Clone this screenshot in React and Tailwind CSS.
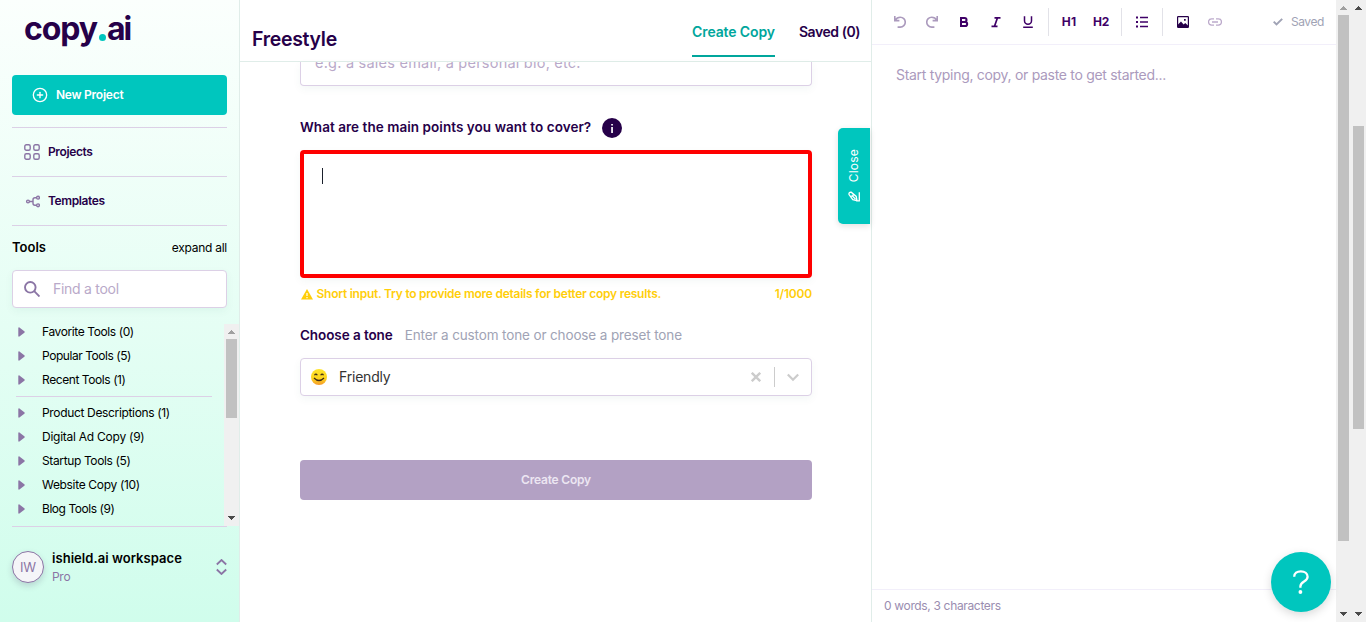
import React from "react";
import { FiPlusCircle } from "react-icons/fi";

const TOOLS_TOP = [
  ["Favorite Tools (0)", "tracking-[-0.4px]"],
  ["Popular Tools (5)", "tracking-[-0.45px]"],
  ["Recent Tools (1)", "tracking-[-0.42px]"],
];
const TOOLS_MAIN = [
  ["Product Descriptions (1)", "tracking-[-0.34px]"],
  ["Digital Ad Copy (9)", "tracking-[-0.25px]"],
  ["Startup Tools (5)", "tracking-[-0.37px]"],
  ["Website Copy (10)", "tracking-[-0.33px]"],
  ["Blog Tools (9)", "tracking-[-0.45px]"],
];

function ToolRow({ label, tracking }) {
  return (
    <li className="flex h-6 items-center">
      <svg className="ml-[6px] h-[10px] w-[7px]" viewBox="0 0 7 10">
        <path d="M0.3 1v8c0 .6.6.9 1.100.6L6 6a1.200 1.200 0 0 0 0-2L1.400.4C.9.1.3.4.3 1z" fill="#8b75a5" />
      </svg>
      <span className={"ml-[17px] text-[12px] text-black " + tracking}>{label}</span>
    </li>
  );
}

function Arrow({ up, color }) {
  return (
    <svg className="h-[15px] w-[15px] shrink-0" viewBox="0 0 15 15" shapeRendering="crispEdges">
      <path d={up ? "M4 10h7L7.5 6z" : "M4 5h7L7.5 9z"} fill={color} />
    </svg>
  );
}

function Sidebar() {
  return (
    <aside className="flex w-[240px] shrink-0 flex-col border-r border-[#e0ede9] bg-linear-to-b from-[#fbfffd] to-[#d0fdec]">
      <div className="flex h-[75px] items-start pt-[9px] pl-[24px] text-[32px] leading-[40px] font-bold text-[#260049]">
        <span className="tracking-[-1.1px]">copy</span>
        <span className="mt-[25px] ml-[2px] h-[7px] w-[7px] rounded-full bg-[#00c6be]" />
        <span className="ml-px tracking-[-2px]">ai</span>
      </div>
      <div className="flex flex-col px-3">
        <button className="flex h-10 w-[215px] items-center rounded-[4px] bg-[#00c6be] pl-5 text-[12px] font-semibold text-white">
          <FiPlusCircle className="h-4 w-4" />
          <span className="ml-2 tracking-[-0.25px]">New Project</span>
        </button>
        <div className="mt-3 flex h-[49px] w-[215px] items-center border-t border-[#dcd0e6] pl-3 text-[12px] font-semibold text-[#260049]">
          <svg className="h-4 w-4" viewBox="0 0 16 16" fill="none" stroke="#8b75a5" strokeWidth="1.4">
            <rect x="0.8" y="0.8" width="5.4" height="5.4" rx="1.5" />
            <rect x="9.8" y="0.8" width="5.4" height="5.4" rx="1.5" />
            <rect x="0.8" y="9.8" width="5.4" height="5.4" rx="1.5" />
            <rect x="9.8" y="9.8" width="5.4" height="5.4" rx="1.5" />
          </svg>
          <span className="ml-2 tracking-[-0.38px]">Projects</span>
        </div>
        <div className="flex h-[49px] w-[215px] items-center border-t border-[#dcd0e6] pl-3 text-[12px] font-semibold text-[#260049]">
          <svg className="h-4 w-4" viewBox="0 0 16 16" fill="none" stroke="#8b75a5" strokeWidth="1.400">
            <circle cx="4" cy="8.5" r="1.4" />
            <circle cx="14" cy="4.700" r="1.4" />
            <circle cx="14" cy="12.300" r="1.4" />
            <path d="M5.4 8.5H9M12.6 4.700H11a2 2 0 0 0-2 2v3.600a2 2 0 0 0 2 2h1.600" />
          </svg>
          <span className="ml-2 tracking-[-0.38px]">Templates</span>
        </div>
        <div className="flex h-[45px] w-[215px] items-center justify-between border-t border-[#dcd0e6] text-black">
          <span className="text-[13px] font-semibold">Tools</span>
          <span className="text-[12px] tracking-[-0.25px]">expand all</span>
        </div>
        <div className="flex h-[38px] w-[215px] items-center rounded-[4px] border border-[#dcd0e6] bg-white pl-[11px] shadow-[0_3px_8px_rgba(0,100,80,0.05)]">
          <svg className="h-4 w-4" viewBox="0 0 16 16" fill="none" stroke="#8b75a5" strokeWidth="1.900">
            <circle cx="6.3" cy="6.3" r="5.300" />
            <path d="M10.200 10.200l5.300 5.300" />
          </svg>
          <span className="mb-[2px] ml-[13px] text-[14px] tracking-[-0.28px] text-[#b9a9c9]">Find a tool</span>
        </div>
      </div>
      <div className="mt-4 flex h-[202px] pl-3">
        <div className="flex-1 overflow-hidden">
          <ul className="-mt-1">
            {TOOLS_TOP.map(([l, t]) => <ToolRow key={l} label={l} tracking={t} />)}
          </ul>
          <hr className="mt-1 mr-3 ml-1 border-[#dcd0e6]" />
          <ul className="mt-1">
            {TOOLS_MAIN.map(([l, t]) => <ToolRow key={l} label={l} tracking={t} />)}
          </ul>
        </div>
        <div className="flex w-[15px] shrink-0 flex-col items-center justify-between bg-[#f0f0f0]">
          <Arrow up color="#a0a0a0" />
          <div className="mb-auto h-[79px] w-[11px] bg-[#c1c1c1]" />
          <Arrow color="#4a4a4a" />
        </div>
      </div>
      <div className="mx-3 flex w-[215px] flex-1 items-start border-t border-[#dcd0e6]">
        <div className="mt-6 flex h-8 w-8 items-center justify-center rounded-full border border-[#8b75a5] bg-[#f5f5f8] pt-px text-[13px] tracking-[-0.2px] text-[#8b75a5] shadow-[0_3px_6px_rgba(60,40,90,0.18)]">IW</div>
        <div className="mt-[21px] ml-2 flex flex-col">
          <span className="text-[13px] leading-5 font-semibold tracking-[0.05px] text-black">ishield.ai workspace</span>
          <span className="mt-px text-[12px] leading-4 tracking-[-0.3px] text-[#8b75a5]">Pro</span>
        </div>
        <svg className="mt-8 ml-auto h-4 w-[11px]" viewBox="0 0 11 16" fill="none" stroke="#8b75a5" strokeWidth="1.800">
          <path d="M0.800 5.500L5.500 1l4.700 4.500M0.800 10.500l4.700 4.500 4.700-4.500" />
        </svg>
      </div>
    </aside>
  );
}

function Main() {
  return (
    <main className="relative flex w-[632px] shrink-0 flex-col border-r border-[#e0ede9] bg-white">
      <header className="flex h-[62px] shrink-0 border-b border-[#e0ede9] pr-[11px] pl-3 text-[#260049]">
        <h1 className="mt-[26px] text-[19.500px] leading-[26px] font-semibold tracking-[-0.3px]">Freestyle</h1>
        <nav className="ml-auto flex gap-6 text-[14px] font-semibold">
          <span className="h-[57px] border-b-2 border-[#00a69c] pt-[22px] leading-5 tracking-[-0.12px] text-[#00a69c]">Create Copy</span>
          <span className="pt-[22px] leading-5 tracking-[-0.45px]">Saved (0)</span>
        </nav>
      </header>
      <div className="ml-[60px] flex w-[512px] flex-1 flex-col">
        <div className="h-6 overflow-hidden rounded-b-[4px] border-x border-b border-[#dcd0e6] pl-[14px] shadow-[0_3px_8px_rgba(0,100,80,0.05)]">
          <span className="-mt-[9px] block text-[14.500px] leading-5 tracking-[0.230px] text-[#b9a9c9]">e.g. a sales email, a personal bio, etc.</span>
        </div>
        <div className="mt-[31px] flex h-5 items-center">
          <span className="text-[13.500px] font-semibold tracking-[0.050px] text-[#260049]">What are the main points you want to cover?</span>
          <svg className="mt-[2px] ml-[11px] h-5 w-5" viewBox="0 0 20 20">
            <circle cx="10" cy="10" r="10" fill="#260049" />
            <path d="M9.200 6h1.700v1.600H9.200zM9.200 9h1.700v6H9.200z" fill="#fff" />
          </svg>
        </div>
        <div className="mt-[13px] h-32 rounded-[4px] border-4 border-[#fe0000] bg-white pt-[14px] pl-[18px] shadow-[0_3px_8px_rgba(0,100,80,0.05)]">
          <div className="h-4 w-px bg-[#1a202c]" />
        </div>
        <div className="mt-2 flex h-4 items-center text-[12px] font-semibold text-[#ffce0a]">
          <svg className="ml-px h-[11px] w-3" viewBox="0 0 12 11">
            <path d="M6 0l6 10.500H0z" fill="#ffce0a" />
            <path d="M5.400 4h1.200v3H5.400zM5.400 8h1.200v1.200H5.400z" fill="#fff" />
          </svg>
          <span className="ml-[3.500px] tracking-[-0.250px]">Short input. Try to provide more details for better copy results.</span>
          <span className="ml-auto tracking-[-0.200px]">1/1000</span>
        </div>
        <div className="mt-[23px] flex h-5 items-center">
          <span className="text-[13.500px] font-semibold tracking-[-0.080px] text-[#260049]">Choose a tone</span>
          <span className="ml-3 text-[13.500px] tracking-[-0.130px] text-[#a0a3b5]">Enter a custom tone or choose a preset tone</span>
        </div>
        <div className="mt-[13px] flex h-[38px] items-center rounded-[4px] border border-[#dcd0e6] bg-white pl-[10px] shadow-[0_3px_8px_rgba(0,100,80,0.05)]">
          <svg className="h-4 w-4" viewBox="0 0 16 16">
            <defs><linearGradient id="face" x1="0" y1="0" x2="0" y2="1"><stop offset="0" stopColor="#ffe52c" /><stop offset="0.600" stopColor="#fcd31d" /><stop offset="1" stopColor="#f59a2c" /></linearGradient></defs>
            <circle cx="8" cy="8" r="8" fill="url(#face)" />
            <path d="M3.500 6.300q1.400-2.400 2.800 0M9.700 6.300q1.400-2.400 2.800 0M3 9q5 5 10 0" fill="none" stroke="#3c2b17" strokeWidth="1.200" />
          </svg>
          <span className="mb-[2px] ml-3 text-[14px] tracking-[-0.200px] text-[#333]">Friendly</span>
          <svg className="ml-auto h-[10px] w-[10px]" viewBox="0 0 10 10" stroke="#ccc" strokeWidth="2.400"><path d="M.8.8l8.400 8.400M9.200.8L.8 9.200" /></svg>
          <div className="ml-[13px] h-5 w-px bg-[#ccc]" />
          <svg className="mr-3 ml-3 h-3 w-3" viewBox="0 0 12 12" fill="none" stroke="#ccc" strokeWidth="2.200"><path d="M.8 3.500L6 8.700l5.200-5.200" /></svg>
        </div>
        <button className="mt-16 h-10 rounded-[4px] bg-[#b3a1c4] text-[12px] font-semibold tracking-[-0.200px] text-[#ece6f2]">Create Copy</button>
      </div>
      <div className="absolute top-32 right-px flex h-24 w-8 flex-col items-center rounded-l-[5px] bg-[#00c6be] text-white shadow-[0_2px_6px_rgba(0,0,0,0.12)]">
        <span className="mt-[21px] rotate-180 text-[12px] leading-4 tracking-[0.200px] [writing-mode:vertical-rl]">Close</span>
        <svg className="mt-[9px] h-3 w-3" viewBox="0 0 12 12" fill="none" stroke="#fff" strokeWidth="1.300">
          <path d="M1 3.600Q.600 1 3.200 1.200L8.200 5.400 9 9.600 4.800 8.600zM2.600 5.400Q5.600 5.400 5.200 2.900M4.700 5.300l2.800 2.800M11.300 1.300v8.900M8 9.800h3.900" />
        </svg>
      </div>
    </main>
  );
}

function ToolButton({ children }) {
  return <span className="flex h-7 w-8 shrink-0 items-center justify-center">{children}</span>;
}

function Divider() {
  return <span className="mx-1 h-7 w-px shrink-0 bg-[#e2e2e8]" />;
}

function Editor() {
  return (
    <section className="flex w-[464px] shrink-0 flex-col bg-white">
      <div className="flex h-[45px] shrink-0 items-center border-b border-[#f2effa] pl-3 text-[#3f0067]">
        <ToolButton>
          <svg className="h-3 w-3" viewBox="0 0 12 12" fill="none" stroke="#ab9abd" strokeWidth="1.600"><path d="M.8 0v4.600h4.600M1 4.300Q3 1.200 6.300 1.200a4.900 4.900 0 0 1 0 9.900H3.600" /></svg>
        </ToolButton>
        <ToolButton>
          <svg className="h-3 w-3" viewBox="0 0 12 12" fill="none" stroke="#ab9abd" strokeWidth="1.600"><path d="M11.200 0v4.600H6.600M11 4.300Q9 1.200 5.700 1.200a4.900 4.900 0 0 0 0 9.900h2.700" /></svg>
        </ToolButton>
        <ToolButton>
          <svg className="h-3 w-3" viewBox="0 0 12 12" fill="none" stroke="currentColor" strokeWidth="2"><path d="M3 2h3.600a1.900 1.900 0 0 1 0 3.900H3zM3 5.900h4.100a2.100 2.100 0 0 1 0 4.200H3z" /></svg>
        </ToolButton>
        <ToolButton>
          <svg className="h-3 w-3" viewBox="0 0 12 12" fill="none" stroke="currentColor" strokeWidth="1.700"><path d="M4.500 1.800h6M1.500 10.300h6M7.500 1.800l-3 8.500" /></svg>
        </ToolButton>
        <ToolButton>
          <svg className="h-3 w-3" viewBox="0 0 12 12" fill="none" stroke="currentColor" strokeWidth="1.500"><path d="M2.500 .2v4.600a3.500 3.500 0 0 0 7 0V.2M1.200 11.300h9.600" /></svg>
        </ToolButton>
        <Divider />
        <ToolButton><span className="text-[12px] font-bold tracking-[0.200px]">H1</span></ToolButton>
        <ToolButton><span className="text-[12px] font-bold tracking-[-0.300px]">H2</span></ToolButton>
        <Divider />
        <ToolButton>
          <svg className="h-3 w-3" viewBox="0 0 12 12" fill="currentColor"><path d="M0 .5h2v2H0zM0 5h2v2H0zM0 9.500h2v2H0zM4 .8h8v1.500H4zM4 5.300h8v1.500H4zM4 9.800h8v1.500H4z" /></svg>
        </ToolButton>
        <Divider />
        <ToolButton>
          <svg className="h-3 w-3" viewBox="0 0 12 12"><rect x=".6" y=".6" width="10.800" height="10.800" rx=".6" fill="none" stroke="#260049" strokeWidth="1.200" /><path d="M1 11.400V8.500l3-3 2.600 3 1.600-1.400 2.800 2.400v1.900zM7 3h1.700v1.700H7z" fill="#260049" /></svg>
        </ToolButton>
        <ToolButton>
          <svg className="h-2 w-[14px]" viewBox="0 0 14 8" fill="none" stroke="#bcaacb" strokeWidth="1.300"><path d="M6 .9H3.600a3.100 3.100 0 0 0 0 6.200H6M8 .9h2.400a3.100 3.100 0 0 1 0 6.200H8M4 4h6" /></svg>
        </ToolButton>
        <svg className="ml-auto h-2 w-[10px]" viewBox="0 0 10 8" fill="none" stroke="#a0a3b5" strokeWidth="2"><path d="M.7 3.600l2.800 2.800L9.200.9" /></svg>
        <span className="mr-3 ml-2 text-[12px] tracking-[-0.400px] text-[#a0a3b5]">Saved</span>
      </div>
      <div className="flex-1 pt-[20px] pl-6 text-[14px] leading-5 tracking-[-0.300px] text-[#ab9abd]">Start typing, copy, or paste to get started...</div>
      <div className="flex h-[33px] shrink-0 items-center border-t border-[#f2effa] pl-3 text-[12px] tracking-[-0.340px] text-[#9a8db0]">0 words, 3 characters</div>
    </section>
  );
}

export default function App() {
  return (
    <div className="relative flex h-[622px] w-[1366px] overflow-hidden bg-white font-['Inter',sans-serif]">
      <Sidebar />
      <Main />
      <Editor />
      <div className="flex w-[15px] shrink-0 flex-col items-center bg-[#f0f0f0]">
        <Arrow up color="#a0a0a0" />
        <div className="h-[526px] w-[11px] bg-[#c1c1c1]" />
        <div className="mt-auto flex"><Arrow color="#4a4a4a" /></div>
      </div>
      <div className="flex w-[15px] shrink-0 flex-col items-center bg-[#f0f0f0]">
        <Arrow up color="#4a4a4a" />
        <div className="mt-[111px] h-[303px] w-[11px] bg-[#c1c1c1]" />
        <div className="mt-auto flex"><Arrow color="#4a4a4a" /></div>
      </div>
      <div className="absolute right-[35px] bottom-[10px] flex h-[60px] w-[60px] items-center justify-center rounded-full bg-[#00c6be] shadow-[0_3px_10px_rgba(0,0,0,0.15)]">
        <svg className="h-6 w-4" viewBox="0 0 16 24" fill="none" stroke="#fff" strokeWidth="2.300">
          <path d="M1.200 6.800C1.200 3 4 1.300 7.800 1.300c4 0 6.800 2.200 6.800 5.500 0 5.200-7.200 4.400-7.200 9.800v1.200" />
          <circle cx="7.400" cy="22" r="1.900" fill="#fff" stroke="none" />
        </svg>
      </div>
    </div>
  );
}
